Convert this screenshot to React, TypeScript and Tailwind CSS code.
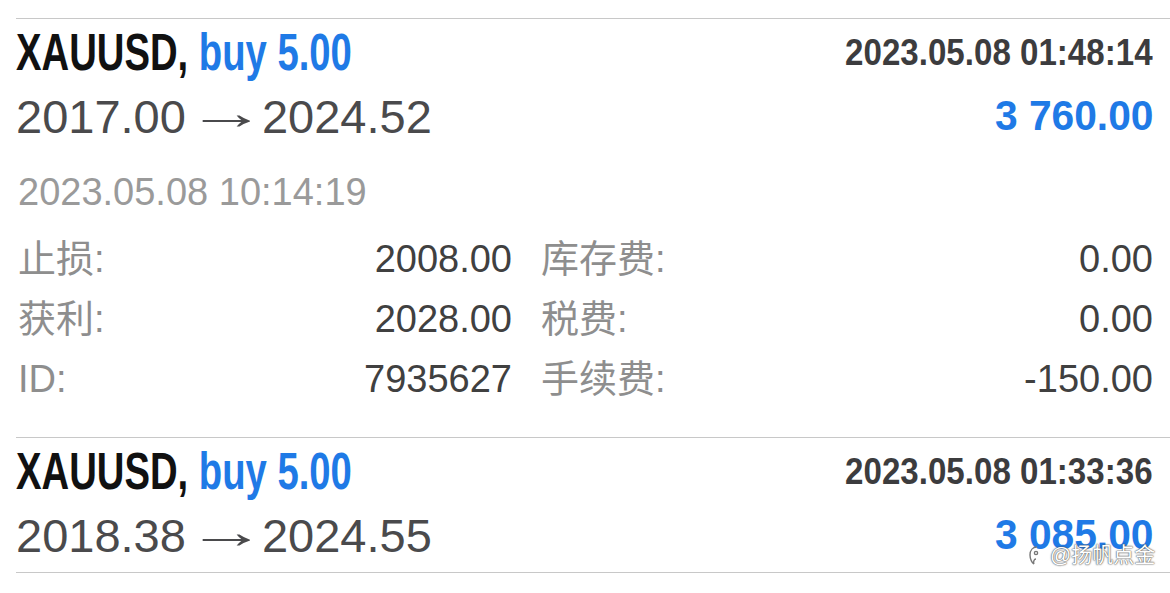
import React from 'react';

interface Trade {
  symbol: string;
  side: string;
  openedAt: string;
  openPrice: string;
  closePrice: string;
  profit: string;
  closedAt?: string;
  details?: { label: string; value: string; label2: string; value2: string }[];
}

const trades: Trade[] = [
  {
    symbol: 'XAUUSD,',
    side: 'buy 5.00',
    openedAt: '2023.05.08 01:48:14',
    openPrice: '2017.00',
    closePrice: '2024.52',
    profit: '3 760.00',
    closedAt: '2023.05.08 10:14:19',
    details: [
      { label: '止损:', value: '2008.00', label2: '库存费:', value2: '0.00' },
      { label: '获利:', value: '2028.00', label2: '税费:', value2: '0.00' },
      { label: 'ID:', value: '7935627', label2: '手续费:', value2: '-150.00' },
    ],
  },
  {
    symbol: 'XAUUSD,',
    side: 'buy 5.00',
    openedAt: '2023.05.08 01:33:36',
    openPrice: '2018.38',
    closePrice: '2024.55',
    profit: '3 085.00',
  },
];

function TradeRow({ trade }: { trade: Trade }) {
  return (
    <div className="ml-4 border-t border-[#c8c8c8] pr-[17px]">
      <div className="flex h-[74px] items-start justify-between">
        <div className="pt-[8px] text-[51px] leading-[51px] font-bold whitespace-nowrap">
          <span className="inline-block origin-left scale-x-[0.75]">
            <span className="text-[#111]">{trade.symbol}</span>{' '}
            <span className="text-[#1f7ae6]">{trade.side}</span>
          </span>
        </div>
        <div className="pt-[15px] text-[37px] leading-[37px] font-bold text-[#3c3c3e] whitespace-nowrap">
          <span className="inline-block origin-right scale-x-[0.895]">{trade.openedAt}</span>
        </div>
      </div>

      <div className="flex h-[60px] items-start justify-between">
        <div className="flex text-[47px] leading-[47px] text-[#4a4a4c] whitespace-nowrap">
          <span>{trade.openPrice}</span>
          <span className="mr-[14px] ml-[16px] inline-block w-[46px] -translate-y-[4px] scale-x-[1.7] text-center">→</span>
          <span>{trade.closePrice}</span>
        </div>
        <div className="pt-[2px] text-[42px] leading-[42px] font-bold text-[#1f7ae6] whitespace-nowrap">
          <span className="inline-block origin-right scale-x-[0.97]">{trade.profit}</span>
        </div>
      </div>

      {trade.details && (
        <div className="pb-[28px]">
          <div className="mt-[20px] pl-[2px] text-[38px] leading-[38px] text-[#9a9a9a]">{trade.closedAt}</div>
          <div className="mt-[18px] grid grid-cols-[494px_1fr] gap-x-[29px] pl-[2px]">
            {trade.details.map((d) => (
              <React.Fragment key={d.label}>
                <div className="flex h-[60px] items-center justify-between text-[38px] leading-[60px]">
                  <span className="text-[#8e8e8e]">{d.label}</span>
                  <span className="text-[#404040]">{d.value}</span>
                </div>
                <div className="flex h-[60px] items-center justify-between text-[38px] leading-[60px]">
                  <span className="text-[#8e8e8e]">{d.label2}</span>
                  <span className="text-[#404040]">{d.value2}</span>
                </div>
              </React.Fragment>
            ))}
          </div>
        </div>
      )}
    </div>
  );
}

export default function App() {
  return (
    <div
      className="relative h-[593px] w-[1170px] overflow-hidden bg-white"
      style={{ fontFamily: '"Liberation Sans", "Noto Sans CJK SC", sans-serif' }}
    >
      <div className="h-[18px]" />
      {trades.map((t, i) => (
        <TradeRow key={i} trade={t} />
      ))}
      <div className="ml-4 border-t border-[#c8c8c8]" />

      {/* watermark */}
      <div className="absolute top-[541px] left-[1028px] flex items-center gap-[10px] text-[21px] leading-[28px] text-white [text-shadow:0_0_2px_#555,0_0_1px_#333]">
        <svg width="12" height="22" viewBox="0 0 12 22" fill="white" stroke="#777" strokeWidth="1.4">
          <path d="M9 3C5 3 2 6 2 11c0 4 2 8 4 9M6 20c-1-2 0-5 2-5" />
          <circle cx="8" cy="9" r="1.6" />
        </svg>
        <span>@扬帆点金</span>
      </div>
    </div>
  );
}
